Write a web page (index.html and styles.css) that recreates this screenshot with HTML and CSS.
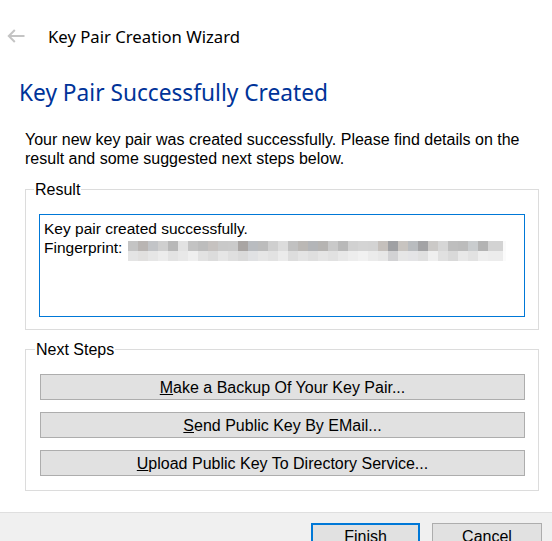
FILE: index.html
```html
<!DOCTYPE html>
<html lang="en">
<head>
    <meta charset="UTF-8">
    <meta name="viewport" content="width=device-width, initial-scale=1.0">
    <title>Key Pair Creation Wizard</title>
    <link rel="stylesheet" href="styles.css">
</head>
<body>
    <!-- Title bar with back arrow -->
    <header class="titlebar">
        <svg class="back" width="18" height="14" viewBox="0 0 18 14">
            <path d="M17.5 7H1.8M7.8 1L1.8 7l6 6" fill="none" stroke="#c4c4c4" stroke-width="2"/>
        </svg>
        <span class="titlebar-text">Key Pair Creation Wizard</span>
    </header>

    <main class="content">
        <h1>Key Pair Successfully Created</h1>
        <p class="intro">Your new key pair was created successfully. Please find details on the result and some suggested next steps below.</p>

        <!-- Result Section -->
        <fieldset class="group">
            <legend>Result</legend>
            <div class="result-box">
                Key pair created successfully.<br>
                Fingerprint: <span class="blurred"></span>
            </div>
        </fieldset>

        <!-- Next Steps Section -->
        <fieldset class="group steps">
            <legend>Next Steps</legend>
            <button class="step-btn"><u>M</u>ake a Backup Of Your Key Pair...</button>
            <button class="step-btn"><u>S</u>end Public Key By EMail...</button>
            <button class="step-btn"><u>U</u>pload Public Key To Directory Service...</button>
        </fieldset>
    </main>

    <footer class="button-bar">
        <button class="dlg-btn default">Finish</button>
        <button class="dlg-btn">Cancel</button>
    </footer>
</body>
</html>
```

FILE: styles.css
```css
/* Reset some default browser styles */
* {
    box-sizing: border-box;
    margin: 0;
    padding: 0;
}

html, body {
    height: 100%;
}

body {
    font-family: 'Liberation Sans', Arial, sans-serif;
    font-size: 16px;
    background-color: #fff;
    color: #000;
    display: flex;
    flex-direction: column;
    overflow: hidden;
}

.titlebar {
    display: flex;
    align-items: center;
    height: 24px;
    margin-top: 25px;
    padding-left: 7px;
    gap: 23px;
}

.back {
    margin-top: -3px;
}

.titlebar-text {
    font-family: 'Noto Sans', 'Open Sans', sans-serif;
    font-size: 16.7px;
    line-height: 24px;
    color: #000;
}

.content {
    padding: 0 13px 0 25px;
}

h1 {
    font-family: 'Noto Sans', 'Open Sans', sans-serif;
    font-weight: normal;
    font-size: 22.7px;
    line-height: 32px;
    color: #003399;
    margin: 28px 0 0 -6px;
}

.intro {
    line-height: 19px;
    margin-top: 21px;
}

.group {
    border: 1px solid #dcdcdc;
    padding: 15px 13px 12px 13px;
    margin-top: 12px;
}

.group legend {
    line-height: 19px;
    padding: 0 1px;
    margin-left: -5px;
}

.result-box {
    height: 103px;
    border: 1px solid #0078d7;
    padding: 4px 4px;
    font-size: 15.5px;
    line-height: 19px;
}

/* pixelated fingerprint value */
.blurred {
    display: inline-block;
    width: 378px;
    height: 20px;
    margin-left: 1px;
    vertical-align: -8px;
    background:
        linear-gradient(to right,
            #c4c4c4 0 10px, #b9b5b3 10px 20px, #c2c4c7 20px 30px, #cfcfcf 30px 40px,
            #b8b8b8 40px 50px, #e2e2e2 50px 60px, #c3c3c3 60px 70px, #bdbdbd 70px 80px,
            #c6c2c0 80px 90px, #c9c9c9 90px 100px, #cacaca 100px 110px, #a9a5a3 110px 120px,
            #b9bcc0 120px 130px, #bcbcbc 130px 140px, #cfcfcf 140px 150px, #dcdcdc 150px 160px,
            #c1c1c1 160px 170px, #bbb8b5 170px 180px, #b3b5b8 180px 190px, #b6b4b2 190px 200px,
            #c9c9c9 200px 210px, #b9b9b9 210px 220px, #d1d1d1 220px 230px, #d4d4d4 230px 240px,
            #d3d3d3 240px 250px, #c5c0bc 250px 260px, #9fa0a3 260px 270px, #c8c4c0 270px 280px,
            #b9bcbf 280px 290px, #a3a3a5 290px 300px, #cbc9c7 300px 310px, #d6d6d6 310px 320px,
            #bebebe 320px 330px, #bcbcbc 330px 340px, #c9ccce 340px 350px, #b3b3b3 350px 360px,
            #d3d3d3 360px 375px, #fafafa 375px 378px) top / 100% 10px no-repeat,
        linear-gradient(to right,
            #e4e4e4 0 10px, #e1e0df 10px 20px, #e6e6e6 20px 30px, #ececec 30px 40px,
            #e3e3e3 40px 50px, #e8e8e8 50px 60px, #efefef 60px 70px, #e2e2e2 70px 80px,
            #dcdcdc 80px 90px, #e6e6e6 90px 100px, #dfdfdf 100px 110px, #dadada 110px 120px,
            #e0e1e3 120px 130px, #e6e6e6 130px 140px, #e2e2e2 140px 150px, #ebebeb 150px 160px,
            #dddddd 160px 170px, #e4e4e4 170px 180px, #dfdfdf 180px 190px, #e5e5e5 190px 200px,
            #e1e1e1 200px 210px, #e8e8e8 210px 220px, #ededed 220px 230px, #f1f1f1 230px 240px,
            #ebebeb 240px 250px, #e7e7e7 250px 260px, #d2d2d4 260px 270px, #e6e6e6 270px 280px,
            #e4e4e6 280px 290px, #e0e0e0 290px 300px, #efefef 300px 310px, #e0e0e0 310px 320px,
            #d9d9d9 320px 330px, #e8e8e8 330px 340px, #e2e2e2 340px 350px, #eeeeee 350px 360px,
            #ececec 360px 375px, #fbfbfb 375px 378px) bottom / 100% 10px no-repeat;
}

.steps {
    display: flex;
    flex-direction: column;
    gap: 12px;
    margin-top: 10px;
    padding: 15px 13px 14px 14px;
}

.step-btn {
    height: 26px;
    padding-top: 2px;
    font-family: 'Liberation Sans', Arial, sans-serif;
    font-size: 16px;
    color: #000;
    background-color: #e1e1e1;
    border: 1px solid #adadad;
}

.button-bar {
    flex: 1;
    margin-top: 21px;
    background-color: #f0f0f0;
    border-top: 1px solid #dfdfdf;
    display: flex;
    justify-content: flex-end;
    gap: 12px;
    padding: 10px 10px 0 0;
    overflow: hidden;
}

.dlg-btn {
    width: 110px;
    height: 26px;
    padding-top: 2px;
    font-family: 'Liberation Sans', Arial, sans-serif;
    font-size: 16px;
    color: #000;
    background-color: #e1e1e1;
    border: 1px solid #adadad;
}

.dlg-btn.default {
    width: 109px;
    border: 2px solid #0078d7;
}
```
